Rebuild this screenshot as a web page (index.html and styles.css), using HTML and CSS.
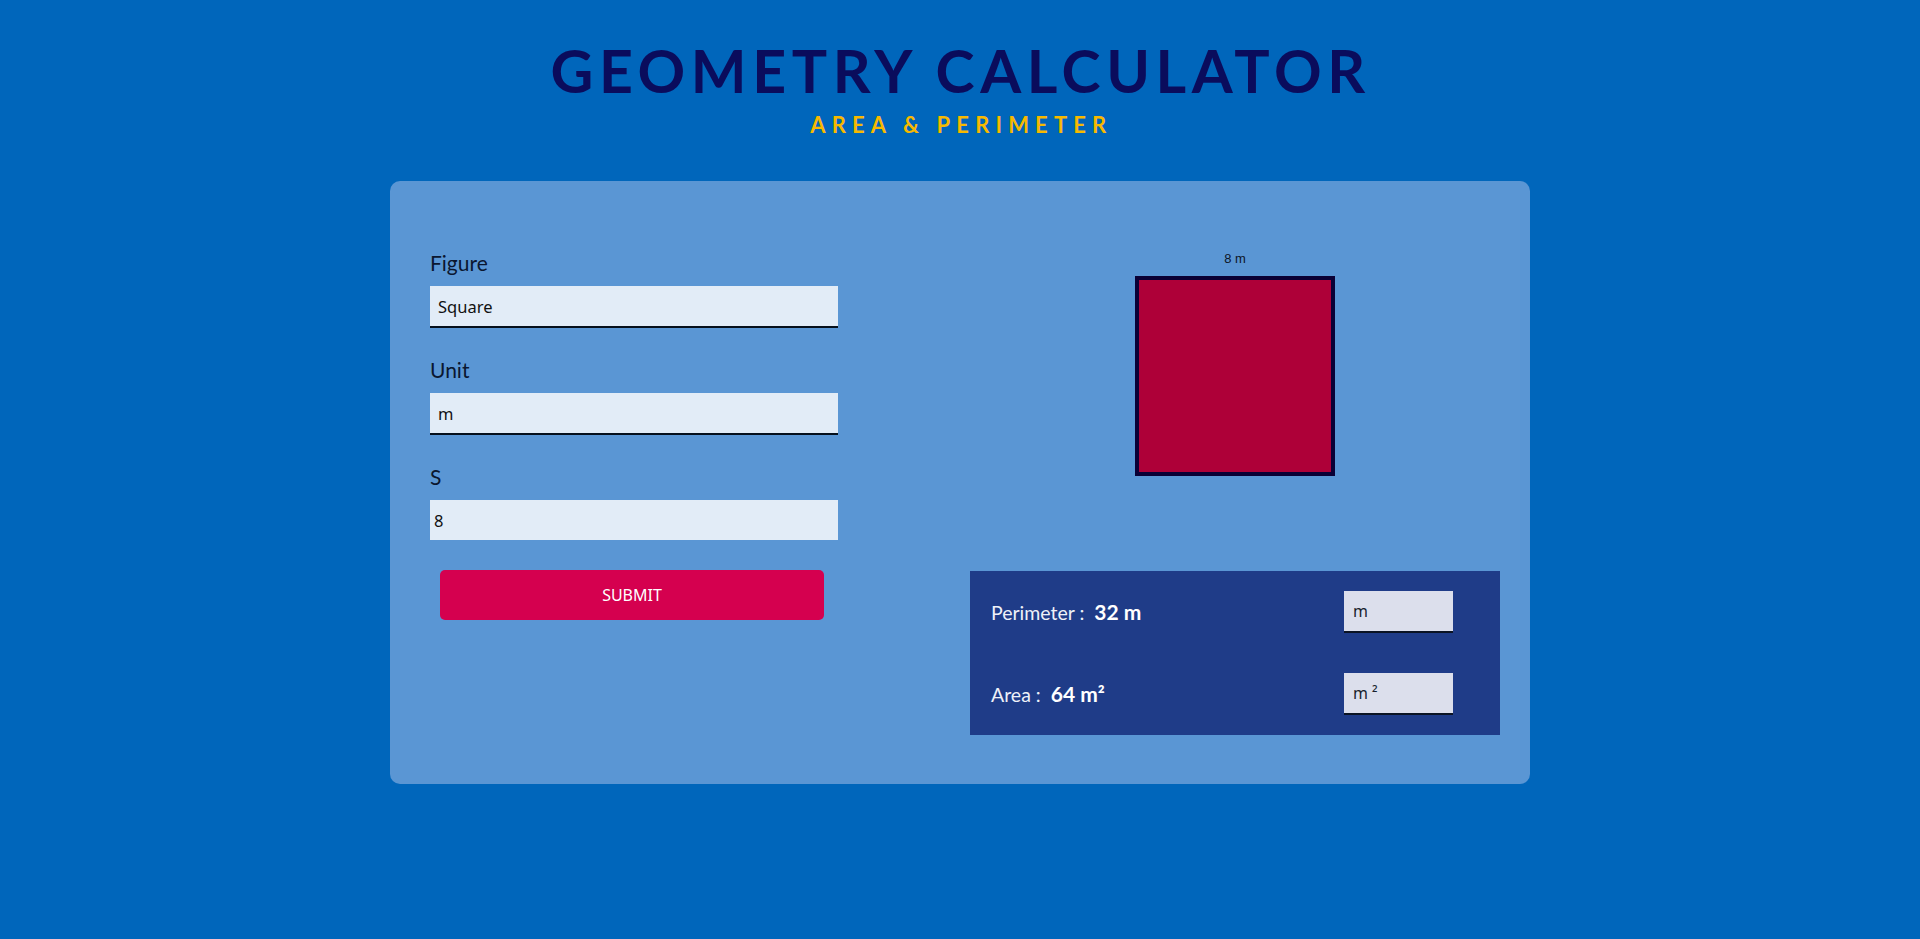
FILE: index.html
```html
<!DOCTYPE html>
<html lang="en">
<head>
<meta charset="utf-8">
<title>Geometry Calculator</title>
<link rel="stylesheet" href="styles.css">
</head>
<body>
<header class="header">
  <h1 class="title">GEOMETRY CALCULATOR</h1>
  <p class="subtitle">AREA &amp; PERIMETER</p>
</header>
<main class="card">
  <form class="form">
    <div class="field">
      <label class="label" for="figure">Figure</label>
      <select id="figure" class="control control-select"><option>Square</option></select>
    </div>
    <div class="field">
      <label class="label" for="unit">Unit</label>
      <select id="unit" class="control control-select"><option>m</option></select>
    </div>
    <div class="field">
      <label class="label" for="side">S</label>
      <input id="side" class="control control-input" type="text" value="8">
    </div>
    <button type="button" class="submit">SUBMIT</button>
  </form>
  <section class="output">
    <div class="drawing">
      <div class="dimension">8 m</div>
      <div class="square"></div>
    </div>
    <div class="results">
      <div class="result-row">
        <div class="result-text"><span class="result-name">Perimeter :</span><span class="result-value">32 m</span></div>
        <select class="result-unit"><option>m</option></select>
      </div>
      <div class="result-row">
        <div class="result-text"><span class="result-name">Area :</span><span class="result-value">64 m²</span></div>
        <select class="result-unit"><option>m ²</option></select>
      </div>
    </div>
  </section>
</main>
</body>
</html>
```

FILE: styles.css
```css
* { box-sizing: border-box; }

html, body {
  margin: 0;
  padding: 0;
}

body {
  background: #0066bb;
  font-family: Lato, "Noto Sans", sans-serif;
  min-height: 939px;
  overflow: hidden;
}

.header {
  padding-top: 41px;
  text-align: center;
}

.title {
  margin: 0;
  font-size: 59px;
  line-height: 1;
  font-weight: 700;
  letter-spacing: 0.095em;
  color: #0a0c5c;
  padding-left: 0.02em;
}

.subtitle {
  margin: 14px 0 0;
  font-size: 22px;
  line-height: 1;
  font-weight: 700;
  letter-spacing: 0.28em;
  padding-left: 0.12em;
  color: #f7b900;
}

.card {
  width: 1140px;
  height: 603px;
  margin: 45px auto 0;
  background: #5a96d4;
  border-radius: 10px;
  padding: 70px 30px 0 40px;
  display: flex;
  align-items: flex-start;
}

.form {
  width: 408px;
  display: flex;
  flex-direction: column;
}

.field {
  display: flex;
  flex-direction: column;
  margin-bottom: 30px;
}

.label {
  font-size: 21px;
  line-height: 24px;
  color: #0a1730;
  margin-bottom: 11px;
}

.control {
  display: block;
  width: 100%;
  height: 42px;
  margin: 0;
  border: none;
  border-radius: 0;
  background: #e2ecf7;
  font-family: "Noto Sans", sans-serif;
  font-size: 16.5px;
  color: #111;
  outline: none;
}

.control-select {
  -webkit-appearance: none;
  appearance: none;
  border-bottom: 2px solid #05101c;
  padding: 0 8px;
}

.control-input {
  height: 40px;
  padding: 0 4px;
}

.submit {
  margin: 0 14px 0 10px;
  height: 50px;
  border: none;
  border-radius: 5px;
  background: #d5004f;
  color: #fff;
  font-family: "Noto Sans", sans-serif;
  font-size: 16px;
}

.output {
  width: 530px;
  margin-left: auto;
  display: flex;
  flex-direction: column;
}

.drawing {
  display: flex;
  flex-direction: column;
  align-items: center;
}

.dimension {
  font-family: "Liberation Sans", Arial, sans-serif;
  font-size: 13px;
  line-height: 15px;
  color: #0d1526;
  margin-bottom: 10px;
}

.square {
  width: 200px;
  height: 200px;
  background: #ae0038;
  border: 4px solid #0a0035;
}

.results {
  margin-top: 95px;
  height: 164px;
  background: #1f3c88;
  padding: 20px 47px 20px 21px;
  display: flex;
  flex-direction: column;
  gap: 40px;
}

.result-row {
  display: flex;
  align-items: center;
  justify-content: space-between;
  height: 42px;
}

.result-text {
  display: flex;
  align-items: baseline;
  gap: 10px;
  color: #eef1f8;
  margin-top: -2px;
}

.result-name {
  font-size: 19.5px;
}

.result-value {
  font-size: 21px;
  font-weight: 700;
  color: #fff;
}

.result-unit {
  -webkit-appearance: none;
  appearance: none;
  width: 109px;
  height: 42px;
  margin: 0;
  border: none;
  border-bottom: 2px solid #0b1424;
  border-radius: 0;
  background: #dcdfec;
  padding: 0 9px;
  font-family: "Noto Sans", sans-serif;
  font-size: 16px;
  color: #1a1f2e;
  outline: none;
}
```
